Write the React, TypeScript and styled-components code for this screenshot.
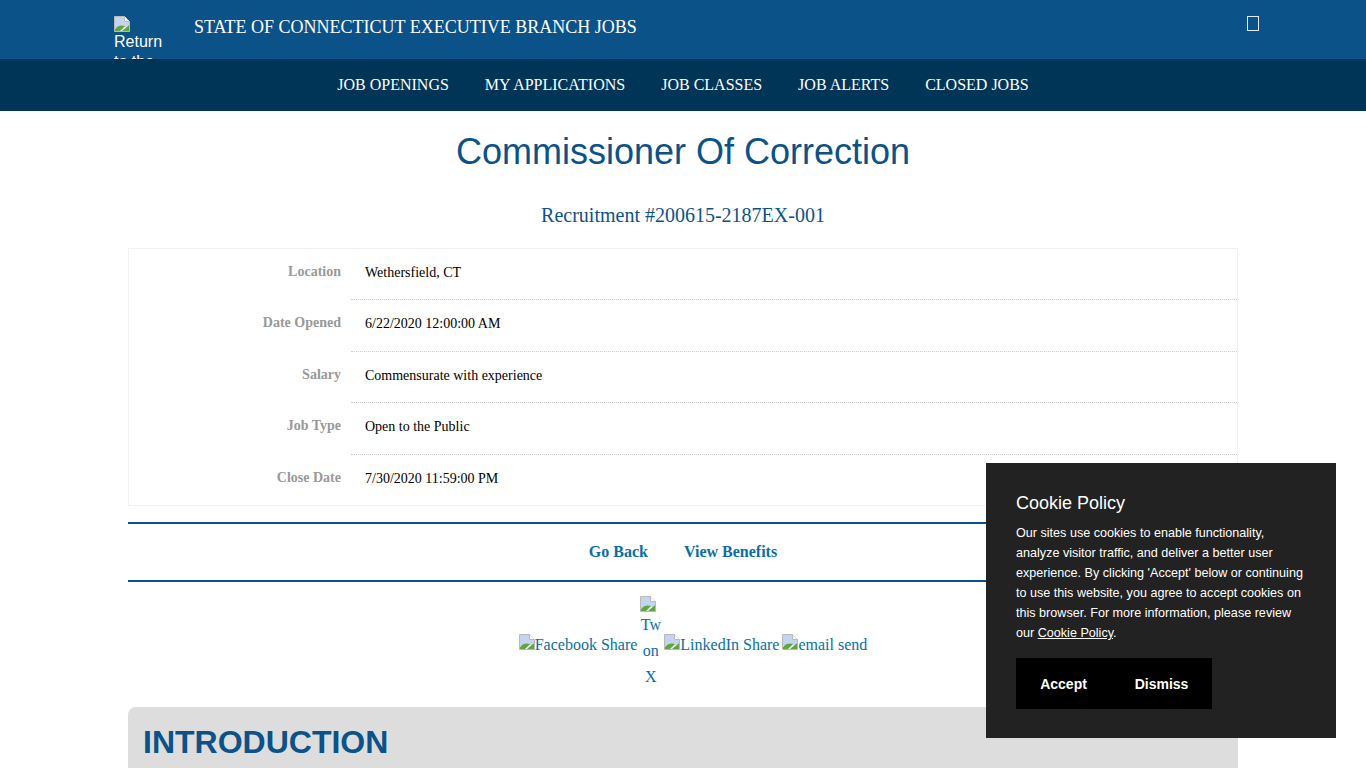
import React from "react";
import styled, { createGlobalStyle } from "styled-components";

const Global = createGlobalStyle`
  html, body { margin: 0; padding: 0; background: #fff; overflow: hidden; height: 768px; }
  body { font-family: "Liberation Serif", "Times New Roman", serif; }
`;

const Page = styled.div`
  width: 1366px;
  height: 768px;
  overflow: hidden;
  position: relative;
`;
const TopBar = styled.header`
  height: 59px;
  background: #0b5289;
  display: flex;
  align-items: flex-start;
  padding-left: 114px;
  overflow: hidden;
  color: #fff;
`;
const LogoLink = styled.a`
  display: block;
  width: 50px;
  margin-top: 16px;
  font: 16px/20px "Liberation Sans", Arial, sans-serif;
  color: #fff;
`;
const BrokenSvg = styled.svg`
  display: block;
  width: 16px;
  height: 16px;
`;
const InlineBroken = styled(BrokenSvg)`
  display: inline-block;
  vertical-align: baseline;
`;
const SiteTitle = styled.div`
  margin: 16px 0 0 30px;
  font-size: 18px;
  line-height: 22px;
`;
const Tofu = styled.span`
  display: block;
  box-sizing: border-box;
  width: 12px;
  height: 15px;
  margin: 16px 107px 0 auto;
  border: 1px solid #dcebf7;
`;
const NavBar = styled.nav`
  height: 52px;
  background: #003558;
  display: flex;
  justify-content: center;
  align-items: center;
  gap: 36px;
`;
const NavLink = styled.a`
  color: #fff;
  font-size: 16px;
  line-height: 52px;
`;
const Content = styled.main`
  width: 1110px;
  margin: 0 auto;
`;
const Title = styled.h1`
  margin: 19px 0 0;
  text-align: center;
  font: 400 36px/44px "Liberation Sans", Arial, sans-serif;
  color: #0b5289;
`;
const Sub = styled.h2`
  margin: 27px 0 0;
  text-align: center;
  font-weight: 400;
  font-size: 20px;
  line-height: 28px;
  color: #0b5289;
`;
const Details = styled.dl`
  box-sizing: border-box;
  margin: 19px 0 0;
  height: 258px;
  border: 1px solid #f2f2f2;
  font-size: 14px;
`;
const Row = styled.div`
  display: flex;
  height: 51.4px;
`;
const Label = styled.dt`
  width: 212px;
  padding-top: 15px;
  text-align: right;
  font-weight: 700;
  color: #999;
  line-height: 16px;
`;
const Value = styled.dd<{ $last?: boolean }>`
  flex: 1;
  margin: 0 0 0 10px;
  padding: 16px 14px 0;
  color: #000;
  line-height: 16px;
  border-bottom: ${(p) => (p.$last ? "none" : "1px dotted #ccc")};
`;
const Actions = styled.div`
  box-sizing: border-box;
  height: 60px;
  margin-top: 16px;
  border-top: 2px solid #0b5289;
  border-bottom: 2px solid #0b5289;
  display: flex;
  justify-content: center;
  align-items: center;
  gap: 36px;
`;
const ActionLink = styled.a`
  color: #0a6ea8;
  font-weight: 700;
  font-size: 16px;
`;
const Share = styled.div`
  display: flex;
  justify-content: center;
  align-items: center;
  gap: 3px;
  height: 90px;
  margin-top: 16px;
  padding-left: 20px;
  color: #0a6ea8;
  font-size: 16px;
`;
const ShareLink = styled.a`
  white-space: nowrap;
  margin-top: 2px;
`;
const Narrow = styled.a`
  display: block;
  width: 21px;
  text-align: center;
  line-height: 26px;
  overflow: hidden;
`;
const Intro = styled.section`
  margin-top: 19px;
  height: 120px;
  background: #ddd;
  border-radius: 8px 8px 0 0;
  padding: 16px 15px;
  box-sizing: border-box;
`;
const IntroTitle = styled.h2`
  margin: 0;
  font: 700 32px/38px "Liberation Sans", Arial, sans-serif;
  color: #0b5289;
`;
const Cookie = styled.aside`
  position: absolute;
  left: 986px;
  top: 463px;
  width: 350px;
  height: 275px;
  box-sizing: border-box;
  padding: 29px 30px;
  background: #222;
  color: #fff;
  font-family: "Liberation Sans", Arial, sans-serif;
`;
const CookieTitle = styled.div`
  font-size: 18px;
  line-height: 22px;
`;
const CookieText = styled.p`
  margin: 9px 0 0;
  font-size: 12.6px;
  line-height: 20px;
  a { color: #fff; text-decoration: underline; }
`;
const Buttons = styled.div`
  display: flex;
  margin-top: 15px;
  width: 196px;
  height: 51px;
  background: #000;
`;
const CookieBtn = styled.button<{ $w: number }>`
  width: ${(p) => p.$w}px;
  border: 0;
  padding: 0;
  background: transparent;
  color: #fff;
  font: 700 14px "Liberation Sans", Arial, sans-serif;
`;

const Broken = ({ inline }: { inline?: boolean }) => {
  const Comp = inline ? InlineBroken : BrokenSvg;
  return (
    <Comp viewBox="0 0 16 16" aria-hidden="true">
      <path d="M0.5 0.5H10.5L15.5 5.5V15.5H0.5Z" fill="#fff" stroke="#b9b9b9" />
      <path d="M1 1H10V6H15V9L12 11L1 12Z" fill="#c3d4f0" />
      <path d="M1 15V13C4 9 8 9 11 10C9 12 7 14 6 15Z" fill="#5ea63e" />
      <path d="M15 15H8L15 9Z" fill="#5ea63e" />
      <path d="M10.5 0.5V5.5H15.5" fill="#fff" stroke="#b9b9b9" />
    </Comp>
  );
};

const rows = [
  ["Location", "Wethersfield, CT"],
  ["Date Opened", "6/22/2020 12:00:00 AM"],
  ["Salary", "Commensurate with experience"],
  ["Job Type", "Open to the Public"],
  ["Close Date", "7/30/2020 11:59:00 PM"],
];
const nav = ["JOB OPENINGS", "MY APPLICATIONS", "JOB CLASSES", "JOB ALERTS", "CLOSED JOBS"];

export default function App() {
  return (
    <Page>
      <Global />
      <TopBar>
        <LogoLink>
          <Broken />
          Return to the homepage
        </LogoLink>
        <SiteTitle>STATE OF CONNECTICUT EXECUTIVE BRANCH JOBS</SiteTitle>
        <Tofu />
      </TopBar>
      <NavBar>
        {nav.map((n) => (
          <NavLink key={n}>{n}</NavLink>
        ))}
      </NavBar>
      <Content>
        <Title>Commissioner Of Correction</Title>
        <Sub>Recruitment #200615-2187EX-001</Sub>
        <Details>
          {rows.map(([l, v], i) => (
            <Row key={l}>
              <Label>{l}</Label>
              <Value $last={i === rows.length - 1}>{v}</Value>
            </Row>
          ))}
        </Details>
        <Actions>
          <ActionLink>Go Back</ActionLink>
          <ActionLink>View Benefits</ActionLink>
        </Actions>
        <Share>
          <ShareLink>
            <Broken inline />
            Facebook Share
          </ShareLink>
          <Narrow>
            <Broken />
            Tw on X
          </Narrow>
          <ShareLink>
            <Broken inline />
            LinkedIn Share
          </ShareLink>
          <ShareLink>
            <Broken inline />
            email send
          </ShareLink>
        </Share>
        <Intro>
          <IntroTitle>INTRODUCTION</IntroTitle>
        </Intro>
      </Content>
      <Cookie>
        <CookieTitle>Cookie Policy</CookieTitle>
        <CookieText>
          Our sites use cookies to enable functionality, analyze visitor traffic, and deliver a better user experience. By clicking 'Accept' below or continuing to use this website, you agree to accept cookies on this browser. For more information, please review our <a>Cookie Policy</a>.
        </CookieText>
        <Buttons>
          <CookieBtn $w={95}>Accept</CookieBtn>
          <CookieBtn $w={101}>Dismiss</CookieBtn>
        </Buttons>
      </Cookie>
    </Page>
  );
}
